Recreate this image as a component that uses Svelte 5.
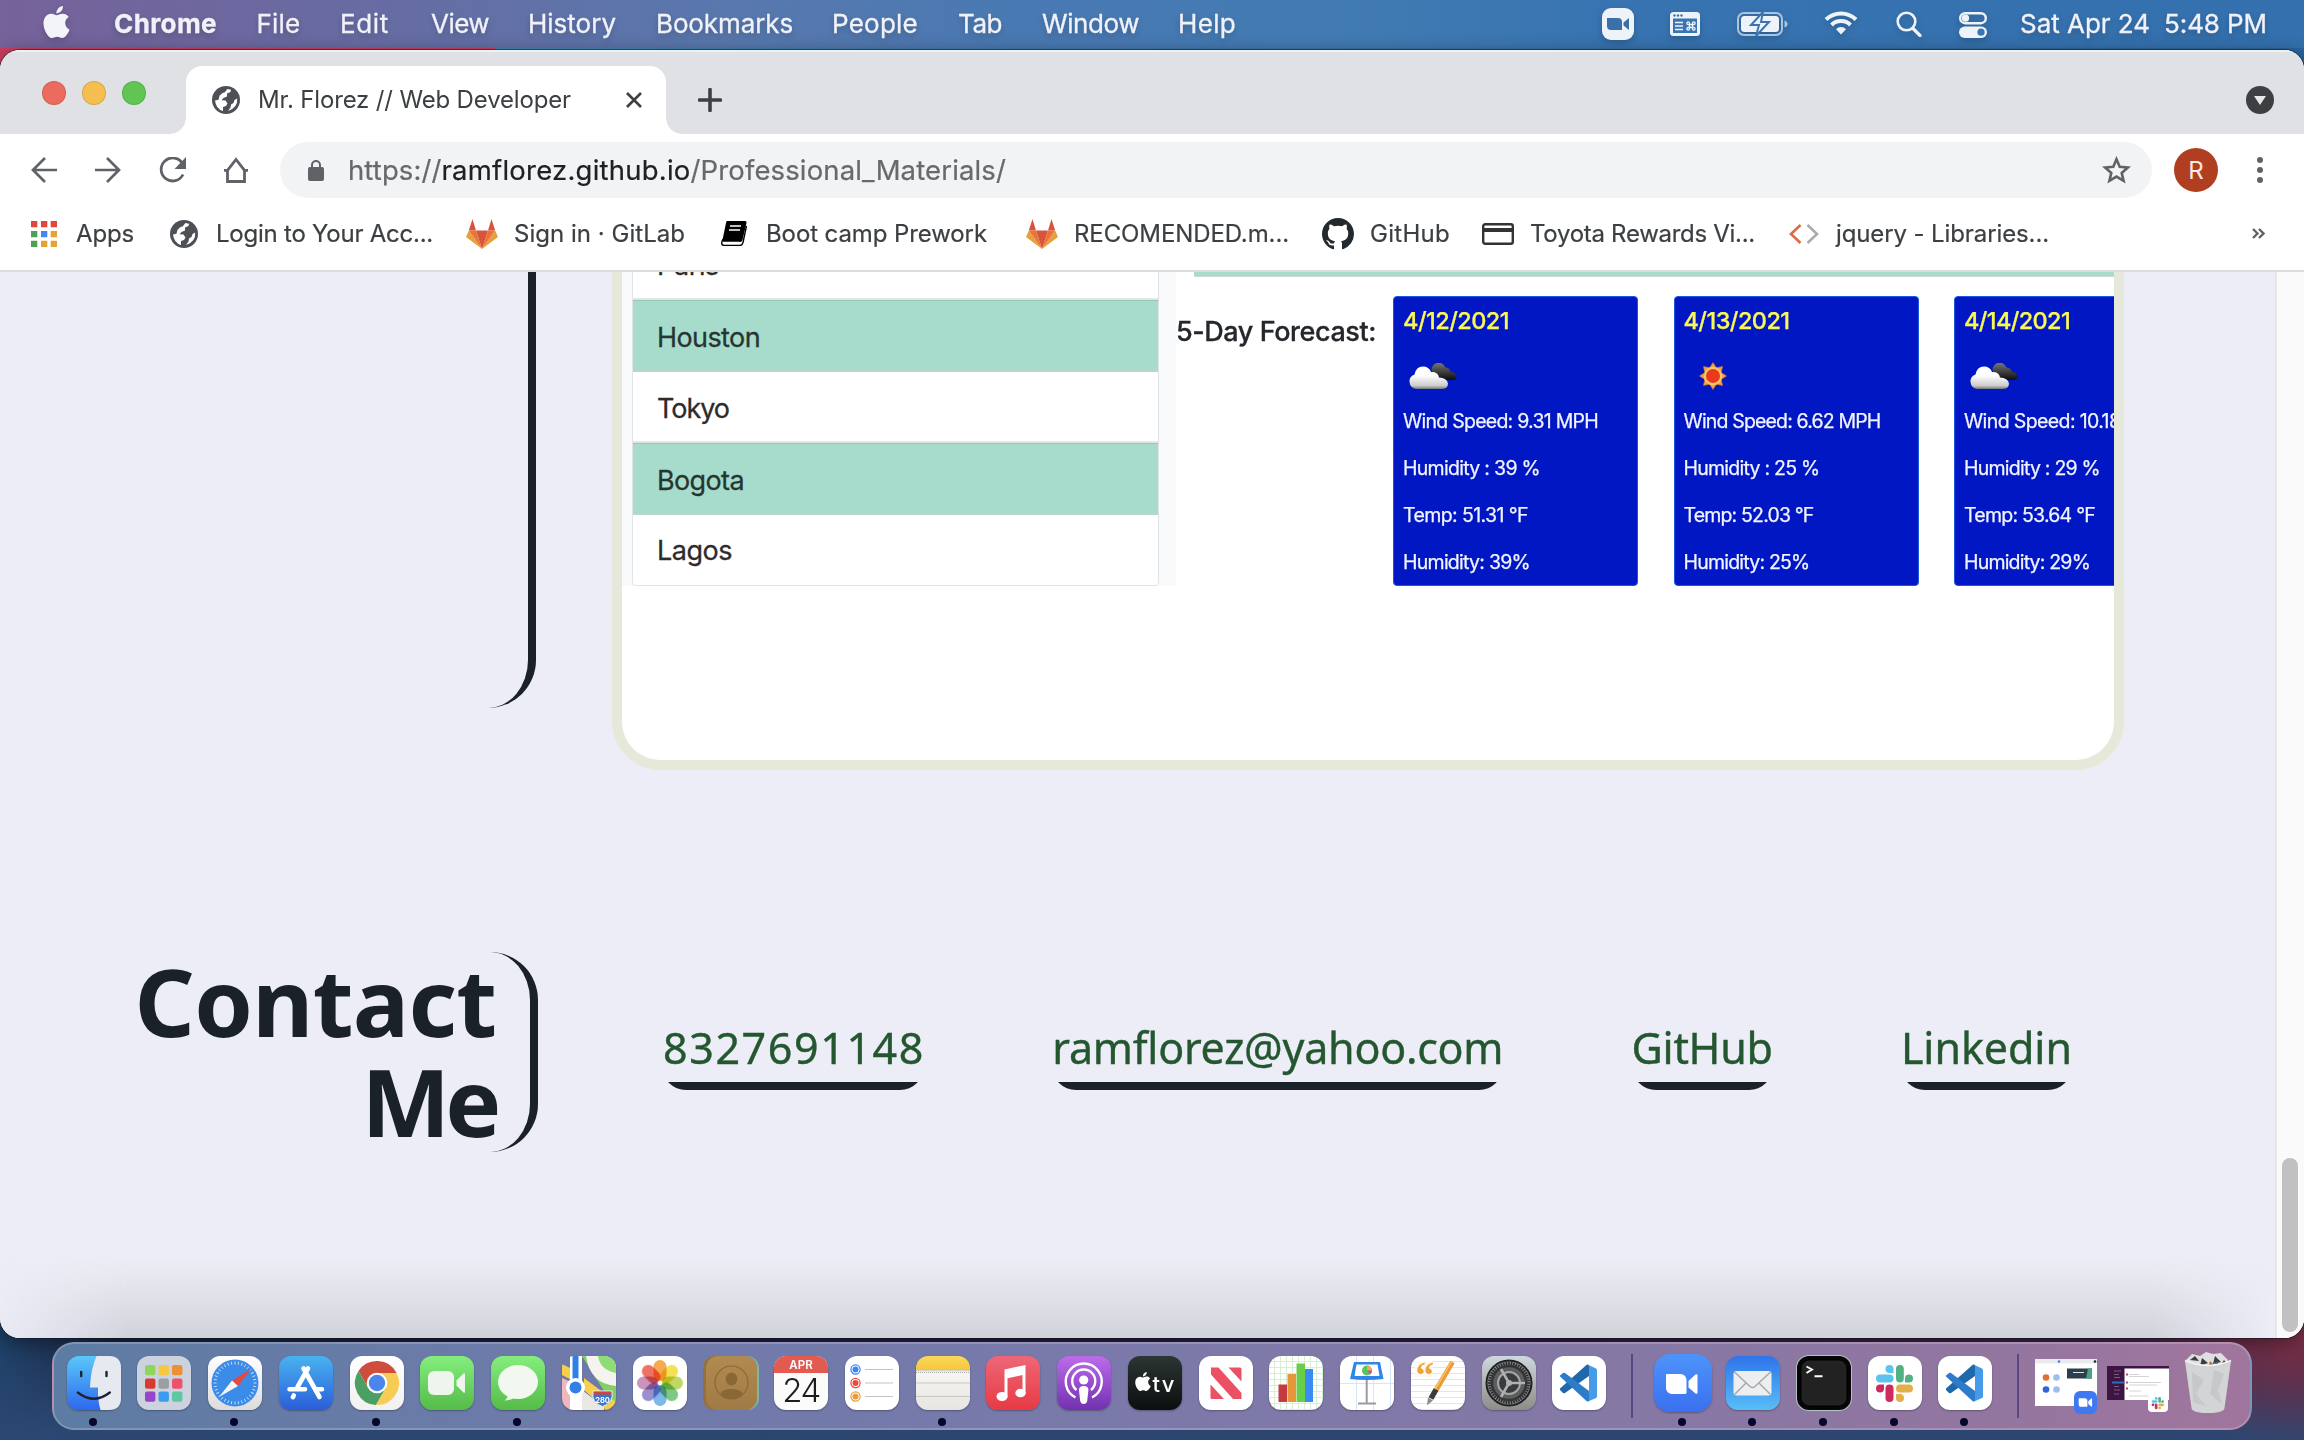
<script>
  // Tracks a label out (or in) so that it fills exactly the given width.
  function fit(node, width) {
    const natural = node.getBoundingClientRect().width;
    const count = node.textContent.length;
    node.style.letterSpacing = `${(width - natural) / count}px`;
  }

  const menus = [
    ['File', 44], ['Edit', 49], ['View', 58], ['History', 88], ['Bookmarks', 137],
    ['People', 86], ['Tab', 44], ['Window', 97], ['Help', 58]
  ];

  const cities = ['Paris', 'Houston', 'Tokyo', 'Bogota', 'Lagos'];
  const cityWidths = [62, 103, 72, 87, 75];

  const days = [
    { date: '4/12/2021', dw: 106, icon: 'cloud', lines: [['Wind Speed: 9.31 MPH', 195], ['Humidity : 39 %', 137], ['Temp: 51.31 °F', 125], ['Humidity: 39%', 127]] },
    { date: '4/13/2021', dw: 106, icon: 'sun', lines: [['Wind Speed: 6.62 MPH', 197], ['Humidity : 25 %', 136], ['Temp: 52.03 °F', 130], ['Humidity: 25%', 126]] },
    { date: '4/14/2021', dw: 106, icon: 'cloud', lines: [['Wind Speed: 10.18 MPH', 204], ['Humidity : 29 %', 136], ['Temp: 53.64 °F', 131], ['Humidity: 29%', 126]] }
  ];

  const links = [['8327691148', 262], ['ramflorez@yahoo.com', 451], ['GitHub', 141], ['Linkedin', 171]];

  const ticks = Array.from({ length: 36 }, (_, i) => i * 10);
  const teeth = Array.from({ length: 48 }, (_, i) => i * 7.5);
  const petals = [
    ['#f5a03a', 0], ['#f3dc3c', 45], ['#b7d34b', 90], ['#6cbf73', 135],
    ['#6aaee6', 180], ['#8c80c8', 225], ['#c585b4', 270], ['#ec5d4f', 315]
  ];
  const pads = [
    ['#8ed65b', 8, 9], ['#f7c73f', 21.5, 9], ['#ee8f36', 35, 9],
    ['#d83a30', 8, 22.5], ['#9b9ea3', 21.5, 22.5], ['#ef5168', 35, 22.5],
    ['#9448c9', 8, 35.5], ['#3a9bf1', 21.5, 35.5], ['#5fc8a0', 35, 35.5]
  ];
</script>

{#snippet apple()}
  <path d="M12.152 6.896c-.948 0-2.415-1.078-3.96-1.04-2.04.027-3.91 1.183-4.961 3.014-2.117 3.675-.546 9.103 1.519 12.09 1.013 1.454 2.208 3.09 3.792 3.039 1.52-.065 2.09-.987 3.935-.987 1.831 0 2.35.987 3.96.948 1.637-.026 2.676-1.48 3.676-2.948 1.156-1.688 1.636-3.325 1.662-3.415-.039-.013-3.182-1.221-3.22-4.857-.026-3.04 2.48-4.494 2.597-4.559-1.429-2.09-3.623-2.324-4.39-2.376-2-.156-3.675 1.09-4.61 1.09zM15.53 3.83c.843-1.012 1.4-2.427 1.245-3.83-1.207.052-2.662.805-3.532 1.818-.78.896-1.454 2.338-1.273 3.714 1.338.104 2.715-.688 3.559-1.701" />
{/snippet}

{#snippet globe()}
  <svg class="globe" viewBox="0 0 28 28"><circle cx="14" cy="14" r="14" fill="#4d5156" /><path fill="#fff" d="M15.500 3l3.500.7-.5 2.300-3.500 1.500v3l-3.500 1.500-2 2.200 4 .3 2 3-1.500 2.500-3 1v4Q4 23 3 14.500l3.500-.8 1-4 3-2.700 2-.5zM25.200 12.500q.8 9-9.200 12.500l2.500-3.500.5-3 2.500-1.500 1-3z" /></svg>
{/snippet}

{#snippet gitlab()}
  <svg width="32" height="30" viewBox="0 0 32 30">
    <path fill="#d9533a" d="M6.500 0L10 11.500H2.800zM25.500 0L29.200 11.500H22z" />
    <path fill="#e8a03c" d="M2.800 11.500L0 18l16 12zM29.200 11.500L32 18 16 30z" />
    <path fill="#e7743a" d="M2.800 11.500H10L16 30zM29.200 11.500H22L16 30z" />
    <path fill="#d9533a" d="M10 11.500h12L16 30z" />
  </svg>
{/snippet}

{#snippet camera()}
  <path fill="#fff" d="M10.500 17.500H24a6 6 0 0 1 6 6V36a1.500 1.500 0 0 1-1.500 1.500H15.500a6 6 0 0 1-6-6V18.500a1 1 0 0 1 1-1zM32 24.500l7-6.500q2-1 2 1v17q0 2-2 1l-7-6z" transform="translate(1.500 -.5)" />
{/snippet}

{#snippet slack()}
  <g fill="#5bc3ec"><rect x="8" y="18.500" width="17.500" height="8" rx="4" /><path d="M25.500 17h-4a4 4 0 1 1 4-4z" /></g>
  <g fill="#51b183"><rect x="28" y="9" width="7.800" height="17.500" rx="3.900" /><path d="M37 26.500v-4a4 4 0 1 1 4 4z" /></g>
  <g fill="#e2b04a"><rect x="28" y="28.500" width="17" height="8" rx="4" /><path d="M28 38h4a4 4 0 1 1-4 4z" /></g>
  <g fill="#ce2a5c"><rect x="17.500" y="28.500" width="8" height="17.500" rx="4" /><path d="M16 28.500v4a4 4 0 1 1-4-4z" /></g>
{/snippet}

{#snippet vscode()}
  <svg viewBox="0 0 54 54">
    <path fill="#1f68ab" d="M35 8.500l2 .5v11L13 37q-1 .5-2 0l-3-3v-1.500z" />
    <path fill="#2d7cc9" d="M8 20.500v-1l3-2.500q1-.5 2 0l24 18v10l-2 .5z" />
    <path fill="#459be8" d="M35 8.200l9 4.300q1 .5 1 1.500v26.500q0 1-1 1.500l-9 4q2-1 2-3V11q0-2-2-2.800z" />
  </svg>
{/snippet}

<div class="screen">
  <header class="menubar">
    <svg class="apple" viewBox="2 0 20 24" fill="#f3f3fa">{@render apple()}</svg>
    <nav class="menus">
      <b><span class="t" use:fit={103}>Chrome</span></b>
      {#each menus as [name, w]}
        <div><span class="t" use:fit={w}>{name}</span></div>
      {/each}
    </nav>
    <div class="status">
      <svg class="s-zoom" width="32" height="32" viewBox="0 0 32 32"><rect width="32" height="32" rx="9" fill="#eef3fa" /><path fill="#3a70a8" d="M5 10h11a4 4 0 0 1 4 4v8H9a4 4 0 0 1-4-4zM21.500 14.500L27 10v12l-5.500-4.500z" /></svg>
      <svg class="s-keys" width="30" height="24" viewBox="0 0 30 24"><rect width="30" height="24" rx="3.500" fill="#eef3fa" /><g fill="#3a75b3"><circle cx="4.500" cy="3.500" r="1.200" /><circle cx="8" cy="3.500" r="1.200" /><circle cx="11.500" cy="3.500" r="1.200" /><path d="M3 6.500h24v14.500H3z" /></g><path d="M5 10.500h8M5 14h8M5 17.500h8" stroke="#eef3fa" stroke-width="1.600" /><path fill="none" stroke="#eef3fa" stroke-width="1.300" d="M19.500 12.500v3h3v-3zM19.500 12.500h-1.300a1.300 1.300 0 1 1 1.300-1.300zM22.500 12.500v-1.300a1.300 1.300 0 1 1 1.300 1.300zM22.500 15.500h1.300a1.300 1.300 0 1 1-1.300 1.300zM19.500 15.500v1.300a1.300 1.300 0 1 1-1.300-1.300z" /></svg>
      <svg class="s-batt" width="51" height="26" viewBox="0 0 51 26"><rect x="1" y="2" width="44" height="22" rx="6" fill="none" stroke="#a9c4df" stroke-width="2" /><path d="M47.500 9.500q3 1 3 3.500t-3 3.500z" fill="#a9c4df" /><rect x="4" y="5" width="38" height="16" rx="3.500" fill="#eef3fa" /><path d="M26 1L14 14h8l-3 11L32 11h-8z" fill="#eef3fa" stroke="#3a75b3" stroke-width="2" /></svg>
      <svg class="s-wifi" width="34" height="25" viewBox="0 0 34 25" fill="none" stroke="#eef3fa" stroke-width="4"><path d="M2 9.500a21.500 21.500 0 0 1 30 0" /><path d="M7.500 15a13.500 13.500 0 0 1 19 0" /><path fill="#eef3fa" stroke="none" d="M17 24.500l-5-5.300a7 7 0 0 1 10 0z" /></svg>
      <svg class="s-find" width="26" height="26" viewBox="0 0 26 26" fill="none" stroke="#eef3fa" stroke-width="2.600"><circle cx="10.500" cy="10.500" r="8.800" /><path stroke-width="3.200" stroke-linecap="round" d="M17 17.500l7 7" /></svg>
      <svg class="s-ctl" width="28" height="26" viewBox="0 0 28 26"><rect x="1.200" y="1.200" width="25.600" height="10" rx="5" fill="none" stroke="#eef3fa" stroke-width="2.400" /><circle cx="6.500" cy="6.200" r="3.600" fill="#eef3fa" /><rect y="14.500" width="28" height="11.500" rx="5.700" fill="#eef3fa" /><circle cx="22" cy="20.200" r="3.600" fill="#3a75b3" /></svg>
      <span class="day"><span class="t" use:fit={130}>Sat Apr 24</span></span>
      <span class="t" use:fit={103}>5:48 PM</span>
    </div>
  </header>

  <main class="window">
    <div class="tabstrip">
      <div class="lights"><i class="red"></i><i class="amber"></i><i class="green"></i></div>
      <div class="tab">
        {@render globe()}
        <div class="title"><span class="t" use:fit={313}>Mr. Florez // Web Developer</span></div>
        <svg width="16" height="16" viewBox="0 0 16 16" stroke="#3c4043" stroke-width="2.600"><path d="M1 1l14 14M15 1L1 15" /></svg>
      </div>
      <svg class="plus" width="24" height="24" viewBox="0 0 24 24" stroke="#3c4043" stroke-width="3.600" stroke-linecap="round"><path d="M1.500 12h21M12 1.500v21" /></svg>
      <svg class="more" width="28" height="28" viewBox="0 0 28 28"><circle cx="14" cy="14" r="14" fill="#3c4043" /><path fill="#e6e8ea" d="M8 10h12l-6 9z" /></svg>
    </div>

    <div class="toolbar">
      <svg width="26" height="26" viewBox="0 0 26 26" fill="none" stroke="#5f6368" stroke-width="2.700"><path d="M26 13H2M14 1L2 13l12 12" /></svg>
      <svg width="26" height="26" viewBox="0 0 26 26" fill="none" stroke="#5f6368" stroke-width="2.700"><path d="M0 13h24M12 1l12 12-12 12" /></svg>
      <svg width="28" height="26" viewBox="0 0 28 26" fill="none" stroke="#5f6368" stroke-width="2.800"><path d="M23.500 6.500A11.500 11.500 0 1 0 24 17.500" /><path stroke="none" fill="#5f6368" d="M27 0v12H15.500z" /></svg>
      <svg class="home" width="26" height="26" viewBox="0 0 26 26" fill="none" stroke="#5f6368" stroke-width="2.800"><path d="M4.500 12.500v12h17v-12M1 13.300h3.500L13 2.500l8.500 10.800H25" /></svg>
      <div class="omnibox">
        <svg width="16" height="21" viewBox="0 0 16 21"><path d="M4 8V5a4 4 0 0 1 8 0v3" fill="none" stroke="#5f6368" stroke-width="2" /><rect y="7" width="16" height="14" rx="2" fill="#5f6368" /></svg>
        <div class="url"><span class="t" use:fit={93.5}>https://</span><span class="t host" use:fit={249}>ramflorez.github.io</span><span class="t" use:fit={315.5}>/Professional_Materials/</span></div>
        <svg width="29" height="28" viewBox="0 0 29 28"><path fill="none" stroke="#5f6368" stroke-width="2.600" d="M14.500 3.200l3.200 7.600 8.200.7-6.200 5.400 1.900 8-7.100-4.300-7.100 4.300 1.900-8-6.200-5.400 8.200-.7z" /></svg>
      </div>
      <div class="avatar">R</div>
      <svg class="dots" width="6" height="26" viewBox="0 0 6 26" fill="#5f6368"><circle cx="3" cy="3" r="3" /><circle cx="3" cy="13" r="3" /><circle cx="3" cy="23" r="3" /></svg>
    </div>

    <div class="bookmarks">
      <div class="bm">
        <svg width="26" height="26" viewBox="0 0 26 26"><path fill="#e2473a" d="M0 0h6.300v6.300H0zM10 0h6.300v6.300H10zM19.700 0H26v6.300h-6.300z" /><path fill="#4f9e5a" d="M0 10h6.300v6.300H0zM0 19.700h6.300V26H0z" /><path fill="#4285f4" d="M10 10h6.300v6.300H10z" /><path fill="#e5a333" d="M19.700 10H26v6.300h-6.300zM19.700 19.700H26V26h-6.300zM10 19.700h6.300V26H10z" /></svg>
        <span class="t" use:fit={58}>Apps</span>
      </div>
      <div class="bm">{@render globe()}<span class="t" use:fit={217}>Login to Your Acc...</span></div>
      <div class="bm">{@render gitlab()}<span class="t" use:fit={171}>Sign in · GitLab</span></div>
      <div class="bm">
        <svg width="27" height="25" viewBox="0 0 27 25"><path d="M7 0h18q2 0 1.500 2l-4 17q-.5 2-2.500 2H4q-2 0-1.500-2L6 2q.3-2 1-2z" /><path d="M3 18q-3 6 1 6.500h16q2 0 3-3L26.500 5" fill="none" stroke="#000" stroke-width="1.400" /><path d="M3.500 21.500h16" stroke="#fff" stroke-width="1.500" /><path d="M10 5h11M9 9h11" stroke="#fff" stroke-width="1.500" /></svg>
        <span class="t" use:fit={221}>Boot camp Prework</span>
      </div>
      <div class="bm">{@render gitlab()}<span class="t" use:fit={215}>RECOMENDED.m...</span></div>
      <div class="bm">
        <svg width="32" height="32" viewBox="0 0 16 16" fill="#24292e"><path d="M8 0C3.580 0 0 3.580 0 8c0 3.540 2.290 6.530 5.470 7.590.4.070.55-.17.55-.38 0-.19-.01-.82-.01-1.490-2.010.37-2.530-.49-2.690-.94-.09-.23-.48-.94-.82-1.130-.28-.15-.68-.52-.01-.53.630-.01 1.080.58 1.230.82.720 1.210 1.870.87 2.330.66.070-.52.280-.87.510-1.070-1.780-.2-3.640-.89-3.640-3.950 0-.87.310-1.590.82-2.150-.08-.2-.36-1.020.08-2.120 0 0 .67-.21 2.200.82.640-.18 1.320-.27 2-.27s1.360.09 2 .27c1.530-1.040 2.200-.82 2.200-.82.440 1.100.16 1.920.08 2.120.51.560.82 1.270.82 2.150 0 3.070-1.870 3.750-3.650 3.950.29.250.54.730.54 1.480 0 1.070-.01 1.930-.01 2.200 0 .21.150.46.550.38A8.010 8.010 0 0 0 16 8c0-4.420-3.580-8-8-8z" /></svg>
        <span class="t" use:fit={80}>GitHub</span>
      </div>
      <div class="bm">
        <svg width="32" height="22" viewBox="0 0 32 22"><rect x="1.200" y="1.200" width="29.600" height="19.600" rx="2" fill="none" stroke="#333" stroke-width="2.400" /><path fill="#333" d="M1 5h30v4H1z" /></svg>
        <span class="t" use:fit={225}>Toyota Rewards Vi...</span>
      </div>
      <div class="bm">
        <svg width="30" height="20" viewBox="0 0 30 20" fill="none" stroke-width="2.600"><path stroke="#dd6b43" d="M11.500 1L2 10l9.500 9" /><path stroke="#ababab" d="M18.500 1L28 10l-9.500 9" /></svg>
        <span class="t" use:fit={213}>jquery - Libraries...</span>
      </div>
      <svg class="chev" width="13" height="11" viewBox="0 0 13 11" fill="none" stroke="#5f6368" stroke-width="2.400"><path d="M1 1l4.500 4.500L1 10M7 1l4.500 4.500L7 10" /></svg>
    </div>

    <div class="viewport">
      <div class="page">
        <section class="work">
          <div class="bracket"></div>
          <article class="card">
            <aside>
              <ul>
                {#each cities as city, i}
                  <li class:on={i % 2 === 1}><span class="t" use:fit={cityWidths[i]}>{city}</span></li>
                {/each}
              </ul>
            </aside>
            <div class="weather">
              <div class="strip"></div>
              <div class="forecast">
                <h3><span class="t" use:fit={200}>5-Day Forecast:</span></h3>
                {#each days as d}
                  <div class="dayCard">
                    <h4><span class="t" use:fit={d.dw}>{d.date}</span></h4>
                    <div class="wx">
                      {#if d.icon === 'cloud'}
                        <svg width="50" height="28" viewBox="0 0 50 28">
                          <defs>
                            <linearGradient id="cd" x2="0" y2="1"><stop offset="0" stop-color="#777" /><stop offset="1" stop-color="#0c0c0c" /></linearGradient>
                            <linearGradient id="cl" x2="0" y2="1"><stop offset=".4" stop-color="#fff" /><stop offset=".85" stop-color="#ccc" /><stop offset="1" stop-color="#777" /></linearGradient>
                          </defs>
                          <path fill="url(#cd)" d="M24 9a7 7 0 0 1 13.500-4.500q4 0 5 4 6 1 6 5.500 0 3-4 3H28z" />
                          <path fill="url(#cl)" d="M8 26a7.500 7.500 0 0 1-1.500-14.500Q8 3.500 15 3.500q6 0 8 5.500 7-.5 8 5.500 8 .5 9 6 0 5.500-7 5.500z" />
                        </svg>
                      {:else}
                        <svg class="sun" width="28" height="28" viewBox="-14 -14 28 28">
                          {#each [0, 45, 90, 135, 180, 225, 270, 315] as a}<path transform="rotate({a})" fill="#f3a33c" stroke="#c8752f" stroke-width=".6" d="M-3.500 -8L0 -13.500 3.500 -8z" />{/each}
                          <circle r="9.200" fill="#f8c46c" /><circle r="7" fill="#ea3a1e" />
                        </svg>
                      {/if}
                    </div>
                    {#each d.lines as [text, w]}
                      <p><span class="t" use:fit={w}>{text}</span></p>
                    {/each}
                  </div>
                {/each}
              </div>
            </div>
          </article>
        </section>

        <section class="contact">
          <h2><span class="t" use:fit={362}>Contact</span><span class="t" use:fit={135}>Me</span></h2>
          <div class="links">
            {#each links as [text, w]}
              <a href="#top"><span class="t" use:fit={w}>{text}</span></a>
            {/each}
          </div>
        </section>
      </div>
      <div class="scroll"><div class="thumb"></div></div>
      <div class="shade"></div>
    </div>
  </main>

  <footer class="dock">
    <div class="apps">
      <div class="tile finder run">
        <svg viewBox="0 0 54 54"><path fill="#e6e9ef" d="M29.500 0Q23.500 14 23 31.500h8Q30.500 44 33.500 54H42q12 0 12-12V12Q54 0 42 0z" /><path stroke="#1d2330" stroke-width="2.400" stroke-linecap="round" fill="none" d="M14.200 16v4M39.500 16v4M10.800 36.500q16 12.500 32 0" /></svg>
      </div>
      <div class="tile launch"><svg viewBox="0 0 54 54">{#each pads as [c, x, y]}<rect {x} {y} width="10.400" height="10.200" rx="2" fill={c} />{/each}</svg></div>
      <div class="tile safari run">
        <svg viewBox="0 0 54 54"><circle cx="27" cy="27" r="23.500" fill="#3b8ce8" />
          {#each ticks as a}<path transform="rotate({a} 27 27)" d="M27 5.500v3" stroke="#c9e1fa" stroke-width=".9" />{/each}
          <path fill="#e3493c" d="M43.500 12.500L24 24.500l6 5.500z" /><path fill="#f4f5f7" d="M11 41L24 24.500l6 5.500z" /></svg>
      </div>
      <div class="tile store"><svg viewBox="0 0 54 54" stroke="#fff" stroke-width="4.600" stroke-linecap="round"><path d="M29 12.500L18.500 31M24.500 12.500L40.500 41M10.500 33.200H26M37 33.200h6M14.800 39.500l-.9 1.700" /></svg></div>
      <div class="tile chrome run">
        <svg viewBox="0 0 54 54"><path fill="#cf4d3c" d="M8.500 15A22 22 0 0 1 46.600 17H27L18.300 32z" /><path fill="#f7cc55" d="M46.600 17A22 22 0 0 1 25.800 49L35.700 32 27 17z" /><path fill="#4c9f62" d="M25.800 49A22 22 0 0 1 8.500 15L18.300 32h17.400z" /><circle cx="27" cy="27" r="10.300" fill="#fff" /><circle cx="27" cy="27" r="8.200" fill="#4c86ec" /></svg>
      </div>
      <div class="tile green"><svg viewBox="0 0 54 54" fill="#eef5ec"><rect x="8" y="15" width="26" height="24" rx="6" /><path d="M36.500 24.500l7-7q1.500-1 1.500 1v17q0 2-1.500 1l-7-7z" /></svg></div>
      <div class="tile green run"><svg viewBox="0 0 54 54" fill="#f2f8f0"><ellipse cx="27" cy="26" rx="20" ry="17" /><path d="M17 38q0 4-3.500 6.500 6 0 10-3z" /></svg></div>
      <div class="tile maps">
        <svg viewBox="0 0 54 54"><path fill="#83cf63" d="M20 0h34v54z" /><path fill="#f4f3ef" d="M24 0h30v30Q28 28 24 0z" /><path fill="#8edd74" d="M36 0h18v17Q38 14 36 0z" /><path fill="#f7cf4b" d="M0 8l8 4v11l-8-4zM22 22l32 24v8H44L22 34z" /><path fill="#efb6bf" d="M0 22l9 4v28H0z" /><path fill="#fff" d="M8 0h12v54H8z" /><path fill="#e9e7e1" d="M20 34l22 17v3H20z" /><path fill="#2f80e8" d="M10.500 0h6v30h-6z" /><circle cx="13.500" cy="31.500" r="9.500" fill="#fff" /><circle cx="13.500" cy="31.500" r="6" fill="#2f80e8" /><path fill="#3577d4" stroke="#eef2f8" stroke-width="1" d="M31 35h19q2 12-9.500 15.500Q29 47 31 35z" /><path fill="#d5433a" d="M32 35.800h17v2.700H32z" /><text x="40.500" y="46.500" text-anchor="middle" font-size="7.500" font-weight="700" fill="#fff">280</text></svg>
      </div>
      <div class="tile white">
        <svg viewBox="0 0 54 54"><g class="petals">{#each petals as [c, a]}<rect transform="rotate({a} 27 27)" x="20.500" y="4" width="13" height="21" rx="6.500" fill={c} />{/each}</g></svg>
      </div>
      <div class="tile contacts"><svg viewBox="0 0 54 54"><circle cx="28.500" cy="26.500" r="16.500" fill="none" stroke="#8a6736" stroke-width="1.200" /><ellipse cx="28.500" cy="23" rx="5.800" ry="6.500" fill="#8a6736" /><path fill="#8a6736" d="M17 38.500q2-5.500 11.500-5.500T40 38.500q-11.500 9-23 0z" /></svg></div>
      <div class="tile cal"><div class="mon">APR</div><div class="num">24</div></div>
      <div class="tile white">
        <svg viewBox="0 0 54 54"><g fill="none" stroke-width="1.200"><circle cx="10.500" cy="13.500" r="4.600" stroke="#3d84f5" /><circle cx="10.500" cy="27" r="4.600" stroke="#ea4b40" /><circle cx="10.500" cy="40.500" r="4.600" stroke="#ee9b37" /><path stroke="#c3c4c8" d="M20 13.500h28M20 27h28M20 40.500h28" /></g><circle cx="10.500" cy="13.500" r="3" fill="#3d84f5" /><circle cx="10.500" cy="27" r="3" fill="#ea4b40" /><circle cx="10.500" cy="40.500" r="3" fill="#ee9b37" /></svg>
      </div>
      <div class="tile notes run"><svg viewBox="0 0 54 54"><path stroke="#c9c7c2" stroke-width="1" d="M0 27h54M0 40.500h54" /><path stroke="#aaa9a5" stroke-width="1" stroke-dasharray="1 1" d="M0 16.500h54" /></svg></div>
      <div class="tile music"><svg viewBox="0 0 54 54" fill="#fff"><path d="M18.500 13.500L39.500 9v28.500h-3V19l-15 3.200v19h-3z" /><ellipse cx="16" cy="40.500" rx="5.500" ry="4.500" /><ellipse cx="34.500" cy="37" rx="5.200" ry="4.300" /></svg></div>
      <div class="tile pod"><svg viewBox="0 0 54 54" fill="none" stroke="#fff" stroke-width="2.400"><path d="M18.500 41.500a18 18 0 1 1 16.500 0" /><path d="M19.500 34a11.500 11.500 0 1 1 14.500 0" /><circle cx="26.700" cy="24" r="4.600" fill="#fff" stroke="none" /><path fill="#fff" stroke="none" d="M22 34q0-4 4.700-4t4.700 4l-1.200 11q-.8 3-3.500 3t-3.500-3z" /></svg></div>
      <div class="tile tv"><svg viewBox="0 0 54 54" fill="#fff"><g transform="translate(5.500 16) scale(.79)">{@render apple()}</g><text x="24.500" y="35.500" font-size="22" font-weight="500" textLength="22">tv</text></svg></div>
      <div class="tile white"><svg viewBox="0 0 54 54" fill="#ec5063"><path d="M12 11.500h7.500l23 25.500v6H34L12 18.500zM29.500 11.500H41q1.500 0 1.500 1.500v12.500zM11.500 28.500L25 43H13q-1.500 0-1.500-1.500z" /></svg></div>
      <div class="tile numbers"><svg viewBox="0 0 54 54"><path fill="#c33b3f" d="M9.500 28.500H18V46H9.500z" /><path fill="#e8963a" d="M18.500 18H27v28h-8.500z" /><path fill="#68d048" d="M27.500 7.500H36V46h-8.500z" /><path fill="#3a8cf0" d="M36 13h8v33h-8z" /></svg></div>
      <div class="tile keynote"><svg viewBox="0 0 54 54"><path stroke="#9a9ca3" stroke-width="2" d="M26.700 22v25M18 47.500h18" /><path fill="#2f86e6" d="M14 6h26l3.500 17q-17 2-33.500 0z" /><path fill="#fff" d="M16.500 8.500h21L39.500 20h-25z" /><circle cx="27" cy="14.500" r="5" fill="#5cc35a" /><path fill="#f0b13c" d="M27 14.500v-5a5 5 0 0 1 5 5z" /><path fill="#d7519a" d="M27 14.500h5a5 5 0 0 1-2 4z" /></svg></div>
      <div class="tile pages"><svg viewBox="0 0 54 54"><rect x="4" y="5" width="17.500" height="16" fill="#fffaf0" /><text x="4.500" y="32" class="quote" font-size="37" fill="#f0a23a">“</text><path stroke="#e99a34" stroke-width="5" d="M41.500 6L24.500 35" /><path stroke="#f7c069" stroke-width="1.500" d="M40.500 5.500L23.500 34.500" /><path stroke="#3b3b3d" stroke-width="5.400" d="M25 33.500l-5 9" /><path fill="#8a8c90" d="M17 41.500l5 3-6 5z" /></svg></div>
      <div class="tile prefs">
        <svg viewBox="0 0 54 54"><circle cx="27" cy="27" r="22.500" fill="#88898b" stroke="#1f2021" stroke-width="2" />
          {#each teeth as a}<path transform="rotate({a} 27 27)" d="M27 6v3" stroke="#2b2c2d" stroke-width="1.600" />{/each}
          <circle cx="27" cy="27" r="17" fill="#5c5d5f" stroke="#343536" stroke-width="2.500" /><circle cx="27" cy="27" r="11" fill="#3a3b3c" stroke="#a5a6a7" stroke-width="2" /><path stroke="#b0b1b2" stroke-width="2.600" d="M27 27h16M27 27l-8-14M27 27l-8 14" /><circle cx="27" cy="27" r="3" fill="#b0b1b2" /></svg>
      </div>
      <div class="tile white">{@render vscode()}</div>
    </div>
    <div class="sep"></div>
    <div class="apps second">
      <div class="tile big run"><svg viewBox="0 0 58 58"><g transform="translate(1 3)">{@render camera()}</g></svg></div>
      <div class="tile mail run"><svg viewBox="0 0 54 54"><rect x="7.500" y="15" width="38" height="24.500" rx="3" fill="#eceef0" /><path fill="none" stroke="#a7a9ac" stroke-width="1.500" d="M8.500 16l15.500 14.500q2.500 2 5 0L44.500 16M8.500 38.500l12-12M44.500 38.500l-12-12" /></svg></div>
      <div class="tile term run"><svg viewBox="0 0 54 54" fill="none" stroke="#fff" stroke-width="1.900"><path d="M9.500 10.500l5.500 3-5.500 3.500M17.500 20.300h8" /></svg></div>
      <div class="tile white run"><svg viewBox="0 0 54 54">{@render slack()}</svg></div>
      <div class="tile white run">{@render vscode()}</div>
    </div>
    <div class="sep"></div>
    <div class="mini one">
      <svg width="62" height="47" viewBox="0 0 62 47"><path fill="#fff" d="M0 0h62v47H0z" /><path fill="#e9ebef" d="M0 0h62v4.500H0z" /><circle cx="24" cy="2.500" r="1.300" fill="#3d7ff0" /><circle cx="60" cy="2.500" r="1.300" fill="#222" /><circle cx="11" cy="18.500" r="3.300" fill="#dd7135" /><circle cx="21.500" cy="18.500" r="3.300" fill="#9ebdf3" /><circle cx="11" cy="30.500" r="3.300" fill="#2f68d6" /><circle cx="21.500" cy="30.500" r="3.300" fill="#9ebdf3" /><path fill="#2d3f4c" d="M32 9.500h25v10H32z" /><path stroke="#dfe5ea" d="M38 13.500h11" /><path fill="#4aa184" d="M53 9.500h4v10h-6z" /></svg>
      <div class="badge blue"><svg viewBox="0 0 54 54">{@render camera()}</svg></div>
    </div>
    <div class="mini two">
      <svg width="62" height="34" viewBox="0 0 62 34"><path fill="#fff" d="M0 0h62v34H0z" /><path fill="#3d1442" d="M0 0h17.500v34H0zM0 0h62v2.500H0z" /><path fill="#2a72b8" d="M5 15.500h12.500v2H5z" /><path stroke="#c9c9cd" stroke-width=".8" d="M22 8.500h10M22 10.500h20M22 16.500h32M22 19h28M22 25h12M22 30h22" /><path stroke="#b05060" stroke-width="2" d="M19 8.500h2M19 16.500h2M19 22.500h2" /><path stroke="#8d6f92" stroke-width=".8" d="M7 5h7M7 8.500h5M7 11.500h6M7 20.500h5M7 24h6M7 28h5" /></svg>
      <div class="badge"><svg viewBox="0 0 54 54">{@render slack()}</svg></div>
    </div>
    <svg class="trash" width="48" height="61" viewBox="0 0 48 61">
      <path fill="#dfdfe0" d="M2 8L8 2l8 2 6-4 7 2 8-1 7 7-4 6H6z" /><path fill="#3c3f3e" d="M6 8l5-4 4 5zM18 6l6 5-8 3zM31 4l6 6-8 2zM40 8l3 4-6 1z" /><path fill="#b8643a" d="M26 9l4 4h-5z" /><path fill="#3d6ea0" d="M32 9l3 4h-4z" />
      <path fill="#d3d4d6" d="M1 9q23 9 46 0L40.500 56q-.5 5-16.500 5T7.500 56z" /><path fill="#bfc0c2" opacity=".6" d="M8 20l12 8-8 14 10 12-13-4zM30 18l10 4-6 16 4 14-12-10z" /><path fill="none" stroke="#f2f2f3" stroke-width="1.600" d="M1 8.500q23 10 46 0" />
    </svg>
  </footer>
</div>

<style>
  :global(body) { margin: 0; overflow: hidden; }
  .screen, .screen :global(*) { box-sizing: border-box; }
  .screen {
    width: 2304px; height: 1440px; overflow: hidden; display: flex; flex-direction: column;
    font-family: Inter, "Liberation Sans", sans-serif;
    background:
      linear-gradient(to right, #c93f5f 0 495px, #4287b8 495px, #2a649e) top / 100% 80px no-repeat,
      radial-gradient(ellipse 170px 120px at 100% 10px, #7c3048 0, transparent 100%) 0 1320px / 100% 120px no-repeat,
      linear-gradient(to bottom, transparent 20px, rgba(44, 72, 116, .95) 110px) 0 1320px / 100% 120px no-repeat,
      linear-gradient(to right, #1d4068 0, #1d2038 110px, #231b38 700px, #331c38 1700px, #47233f 2304px) 0 1320px / 100% 120px no-repeat;
  }
  svg { display: block; flex: none; }
  .t { display: inline-block; white-space: pre; }
  h2, h3, h4, p, ul { margin: 0; padding: 0; list-style: none; }

  .menubar {
    height: 48px; flex: none; display: flex; align-items: center; color: #f1f2f9; font-size: 26px; line-height: 32px;
    padding: 0 37px 1px 43px;
    background: linear-gradient(to right, #77629a 0, #6a6aa1 300px, #5878ae 740px, #4a79b2 1000px, #427bb3 1350px, #3874b1 1600px, #3470ad 2304px);
    text-shadow: 0 3px 6px rgba(0, 0, 0, .22); -webkit-text-stroke: .3px;
  }
  .menubar svg { filter: drop-shadow(0 3px 3px rgba(0, 0, 0, .18)); }
  .apple { width: 27px; height: 32px; margin-top: -3px; }
  .menus { display: grid; grid-template-columns: 142.5px 83.5px 91px 97px 128px 176px 126px 84px 136px 80px; margin-left: 44px; }
  .status { margin-left: auto; display: flex; align-items: center; }
  .s-zoom { margin-right: 1px; }
  .s-keys { margin-left: 35px; }
  .s-batt { margin-left: 37px; }
  .s-wifi { margin-left: 36px; margin-top: -2px; }
  .s-find { margin-left: 38px; }
  .s-ctl { margin-left: 37px; margin-right: 33px; margin-top: 2px; }
  .day { margin-right: 14px; }

  .window { margin-top: 2px; height: 1288px; flex: none; border-radius: 20px; overflow: hidden; display: flex; flex-direction: column; background: #fff; box-shadow: 0 0 0 1px rgba(10, 20, 40, .5), 0 4px 20px rgba(0, 0, 0, .4); }
  .tabstrip { height: 84px; flex: none; background: #dfe1e5; display: flex; padding-left: 42px; border-top: 2px solid #eff0f2; }
  .lights { display: flex; gap: 16px; padding-top: 29px; width: 144px; }
  .lights i { width: 24px; height: 24px; border-radius: 50%; border: 1px solid rgba(0, 0, 0, .12); }
  .red { background: #ed6a5e; }
  .amber { background: #f5bf4f; }
  .lights .green { background: #61c554; }
  .tab { position: relative; width: 480px; height: 68px; margin-top: 14px; background: #fff; border-radius: 16px 16px 0 0; display: flex; align-items: center; padding-left: 26px; padding-bottom: 1px; font-size: 24px; color: #3c4043; }
  .tab::before, .tab::after { content: ""; position: absolute; bottom: 0; width: 16px; height: 16px; }
  .tab::before { left: -16px; background: radial-gradient(circle at 0 0, transparent 15.5px, #fff 16px); }
  .tab::after { right: -16px; background: radial-gradient(circle at 100% 0, transparent 15.5px, #fff 16px); }
  .globe { width: 28px; height: 28px; }
  .title { width: 368px; margin-left: 18px; }
  .plus { margin: 36px 0 0 32px; }
  .more { margin: 34px 30px 0 auto; }

  .toolbar { height: 72px; flex: none; display: flex; align-items: center; padding-left: 31px; gap: 38px; }
  .home { margin-left: -2px; }
  .omnibox { width: 1872px; height: 56px; border-radius: 28px; background: #f1f3f4; display: flex; align-items: center; padding: 0 21px 0 28px; margin-left: -7px; }
  .url { flex: 1; margin-left: 24px; font-size: 27.500px; color: #66696d; white-space: nowrap; -webkit-text-stroke: .2px; }
  .host { color: #202124; }
  .avatar { width: 44px; height: 44px; border-radius: 50%; background: #b03e20; color: #fbe9e4; font-size: 24px; line-height: 45px; text-align: center; margin-left: -16px; }
  .dots { margin-left: 1px; }

  .bookmarks { height: 64px; flex: none; display: grid; align-items: center; padding: 0 0 9px 31px; font-size: 24px; color: #3c4043; -webkit-text-stroke: .2px;
    grid-template-columns: 139px 296px 254px 306px 296px 160px 307px 463px 20px; }
  .bm { display: flex; align-items: center; gap: 18px; height: 55px; }
  .bm:nth-child(1) { gap: 19px; }
  .bm:nth-child(3), .bm:nth-child(5), .bm:nth-child(6), .bm:nth-child(7), .bm:nth-child(8) { gap: 16px; }
  .bm:nth-child(8) { gap: 17px; }
  .bm:nth-child(4) { gap: 19px; }

  .viewport { position: relative; flex: 1; border-top: 2px solid #dadbe0; background: #ededf7; display: flex; overflow: hidden; }
  .page { width: 2275px; }
  .scroll { width: 29px; background: #fafafa; border-left: 2px solid #e6e6e9; display: flex; align-items: flex-end; padding: 0 0 6px 5px; }
  .thumb { width: 16px; height: 174px; border-radius: 8px; background: #c1c1c1; }
  .shade { position: absolute; left: 0; right: 0; bottom: 0; height: 80px; background: linear-gradient(to bottom, rgba(140, 150, 110, 0), rgba(140, 150, 110, .06) 25%, rgba(120, 130, 120, .13) 55%, rgba(105, 115, 115, .21)); mask-image: linear-gradient(to right, rgba(0, 0, 0, .1) 0, #000 130px, #000 2150px, transparent 2275px); }

  .work { display: flex; height: 498px; }
  .bracket { width: 536px; height: 436px; border-right: 8px solid #1a2129; border-radius: 0 0 48px 0; }
  .card { width: 1512px; height: 498px; margin-left: 76px; border: 10px solid #e6e8da; border-top: 0; border-radius: 0 0 48px 48px; background: #fff; display: flex; overflow: hidden; }
  aside { width: 554px; height: 314px; flex: none; background: #f8f9fb; padding-left: 10px; display: flex; align-items: flex-end; overflow: hidden; }
  ul { width: 527px; border: 1px solid #e2e3e5; border-radius: 0 0 4px 4px; background: #fff; }
  li { height: 71.500px; padding: 5px 0 0 24px; display: flex; align-items: center; font-size: 27px; line-height: 34px; color: #2e2b2b; border-bottom: 2px solid #e2e6e6; -webkit-text-stroke: .3px; }
  li:last-child { border-bottom-width: 0; height: 70.500px; padding-top: 3px; }
  li.on { background: #a7dccc; border-top: 1px solid #93c8b8; border-bottom-color: #b5d8ce; color: #263532; }
  .weather { flex: none; width: 1100px; }
  .strip { height: 5px; margin-left: 18px; background: #a7dccc; border-bottom: 1px solid #cfd8d5; }
  .forecast { display: flex; padding-top: 19px; }
  h3 { width: 217px; font-size: 27px; line-height: 34px; font-weight: 500; color: #24272b; padding-top: 19px; -webkit-text-stroke: .3px; }
  .dayCard { width: 245px; height: 290px; margin-right: 35.500px; background: #0217c4; border: 1.500px solid #1c55e0; border-radius: 4px; padding-left: 9px; color: #f2f4ff; font-size: 19.500px; line-height: 24px; -webkit-text-stroke: .25px; }
  h4 { font-size: 23.500px; line-height: 30px; color: #fbf755; font-weight: 500; padding-top: 9px; }
  .wx { height: 61px; padding: 27px 0 0 5px; }
  .sun { margin-left: 10px; margin-top: -1px; }
  .dayCard p { height: 24px; margin: 12px 0 23px; }
  .dayCard p + p { margin-top: 0; }

  .contact { display: flex; padding-top: 182px; }
  h2 { width: 538px; height: 200px; border-right: 8px solid #1a2129; border-radius: 0 48px 48px 0; padding-right: 33.500px; display: flex; flex-direction: column; align-items: flex-end; font: 700 94px/100px "Noto Sans", sans-serif; color: #1a2129; }
  h2 .t { margin-top: -1.500px; margin-bottom: 1.500px; }
  .links { display: flex; padding-top: 65px; margin-left: 124px; }
  a { height: 73px; margin-right: 128.300px; font: 43px/62px "Noto Sans", sans-serif; color: #24572f; text-decoration: none; border-radius: 24px; background: linear-gradient(#1a2129, #1a2129) bottom / 100% 8px no-repeat; -webkit-text-stroke: .4px; }
  a:first-child .t { margin-left: 1px; margin-right: -1px; }

  .dock { position: relative; margin: 4px 0 0 52px; width: 2200px; height: 88px; flex: none; border-radius: 22px; border: 2px solid rgba(255, 255, 255, .2); display: flex; padding-left: 12.500px;
    background: linear-gradient(to right, #5d7ca3 0, #6a7ba8 350px, #737aab 800px, #7f79a8 1250px, #8678a5 1600px, #93769f 1950px, #a1759d 2200px); }
  .apps { display: flex; gap: 16.750px; padding-top: 12px; }
  .tile { position: relative; width: 54px; height: 54px; border-radius: 12px; flex: none; box-shadow: 0 1px 2px rgba(0, 0, 0, .3); }
  .tile > svg { width: 100%; height: 100%; }
  .run::after { content: ""; position: absolute; left: calc(50% - 5px); top: 62px; width: 8px; height: 8px; border-radius: 50%; background: #06052b; }
  .finder { background: linear-gradient(#5ac8f8, #2d68ef); }
  .launch { background: #ccd2de; }
  .safari { background: linear-gradient(#fff, #dcdcdc); }
  .store { background: linear-gradient(#49b2f0, #2a5ed9); }
  .chrome { background: linear-gradient(#fff, #f1f1f1); }
  .tile.green { background: linear-gradient(#84ee7c, #55bb49); }
  .maps { overflow: hidden; }
  .white { background: #fff; }
  .petals rect { mix-blend-mode: multiply; opacity: .88; }
  .contacts { background: linear-gradient(#b08a50, #a17b45); box-shadow: inset 3px 0 0 #94703c, 2px 0 0 #7fb8a0; }
  .cal { background: #fbfbfa; overflow: hidden; text-align: center; color: #1d1d1f; }
  .mon { height: 17px; background: #e35b50; color: #fff; font-weight: 600; font-size: 11.500px; line-height: 18.500px; }
  .num { font-size: 33px; line-height: 34px; font-weight: 300; letter-spacing: -1.500px; }
  .notes { background: linear-gradient(#f9d95a 0, #f6c73e 13.500px, #c7c6c2 14px, #f6f5f2 16px, #e7e5df 100%); }
  .music { background: linear-gradient(#ee6777, #e73a44); }
  .pod { background: linear-gradient(#bd6bea, #7231b1); }
  .tv { background: linear-gradient(#2c3632, #0b0f10); }
  .numbers { background: repeating-linear-gradient(to right, transparent 0 5px, #d9efd4 5px 6px), repeating-linear-gradient(transparent 0 5px, #d9efd4 5px 6px), #fff; }
  .keynote { background: repeating-linear-gradient(to right, transparent 0 16px, #d6e6f7 16px 17px), repeating-linear-gradient(transparent 0 27px, #d6e6f7 27px 28px), #fff; }
  .pages { background: repeating-linear-gradient(transparent 0 5px, #fae3c2 5px 6px), #fff; }
  .quote { font-family: "Liberation Serif", serif; font-weight: 700; }
  .prefs { background: linear-gradient(#cfd8de, #8d8c88); }
  .sep { width: 2px; height: 64px; margin: 10px 0 0 25px; background: #554883; flex: none; }
  .second { margin-left: 20.500px; gap: 16.600px; }
  .second .big { width: 58px; height: 58px; margin: -2px -2px 0 0; border-radius: 16px; background: linear-gradient(#4e93fa, #3a70ef); }
  .big.run::after { top: 64px; }
  .mail { background: linear-gradient(#2f74ea, #58bdf8); }
  .term { background: #222223; border: 3px solid #060607; border-radius: 12px; box-shadow: 0 0 0 1px #b7c2c2, inset 0 0 0 1.500px #000; }
  .term > svg { margin: -3px; width: 54px; height: 54px; }
  .term.run::after { left: 19px; top: 59px; }
  .mini { position: relative; width: 62px; flex: none; }
  .one { margin: 15px 0 0 16px; }
  .two { margin: 22px 0 0 10px; }
  .badge { position: absolute; right: 0; top: 32px; width: 23px; height: 23px; border-radius: 6px; background: #fff; }
  .two .badge { width: 20px; height: 18px; top: 28px; right: 1px; border-radius: 4px; }
  .two .badge svg { width: 20px; height: 18px; }
  .blue { background: #3f79f1; }
  .trash { margin: 8px 0 0 15px; }
</style>
